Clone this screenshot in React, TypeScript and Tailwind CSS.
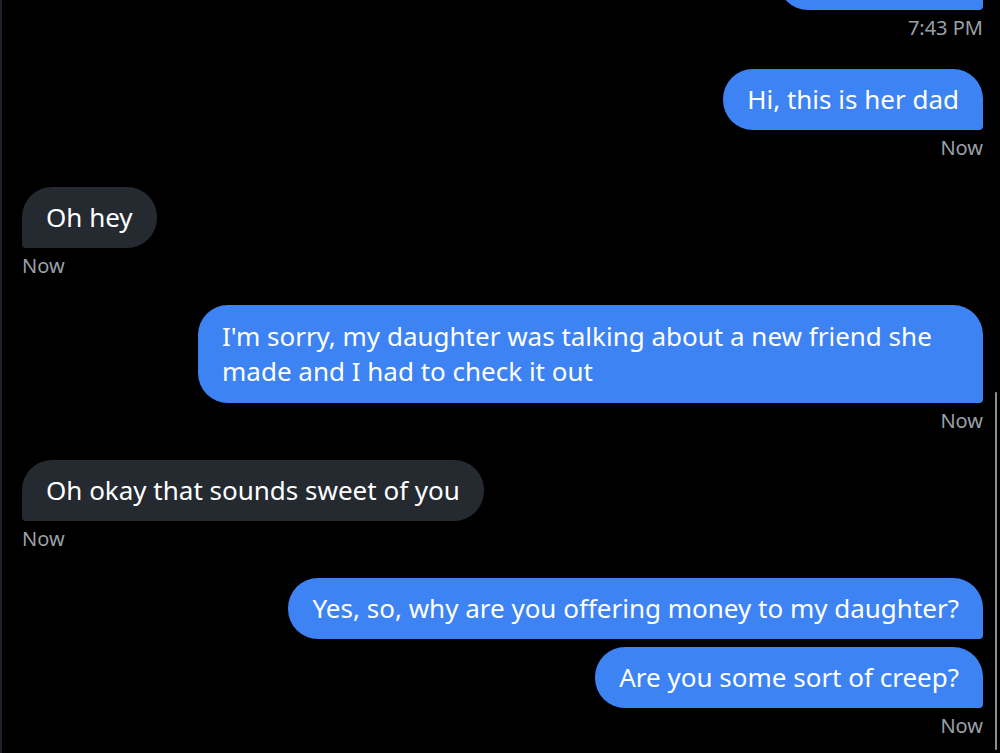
import React from "react";

function Sent({ text, cls = "" }: { text: string; cls?: string }) {
  return (
    <div className="flex shrink-0 justify-end">
      <div
        className={`max-w-[785px] rounded-[30px] rounded-br-[4px] bg-[#3d83f3] px-6 py-[13px] text-[26px] leading-[35px] text-white ${cls}`}
      >
        {text}
      </div>
    </div>
  );
}

function Recv({ text, cls = "" }: { text: string; cls?: string }) {
  return (
    <div className="flex shrink-0 justify-start">
      <div
        className={`max-w-[785px] rounded-[30px] rounded-bl-[4px] bg-[#252a31] px-6 py-[13px] text-[26px] leading-[35px] text-white ${cls}`}
      >
        {text}
      </div>
    </div>
  );
}

function Time({ side, text, cls = "mb-[27px]" }: { side: "left" | "right"; text: string; cls?: string }) {
  return (
    <div
      className={`mt-[6px] shrink-0 text-[20px] leading-[24px] text-[#9aa0a7] ${cls} ${
        side === "right" ? "text-right" : "text-left"
      }`}
    >
      {text}
    </div>
  );
}

export default function App() {
  return (
    <div
      className="relative h-[753px] w-[1000px] overflow-hidden bg-black"
      style={{ fontFamily: '"Noto Sans", "Open Sans", sans-serif' }}
    >
      <div className="flex h-full flex-col justify-end border-l-2 border-[#1e222a] pl-[20px] pr-[17px] pb-[15px]">
        <div className="flex shrink-0 justify-end">
          <div className="h-[60px] w-[205px] rounded-[30px] rounded-br-[4px] bg-[#3d83f3]" />
        </div>
        <Time side="right" text="7:43 PM" cls="mb-[29px]" />
        <Sent text="Hi, this is her dad" />
        <Time side="right" text="Now" />
        <Recv text="Oh hey" />
        <Time side="left" text="Now" />
        <Sent
          text="I'm sorry, my daughter was talking about a new friend she made and I had to check it out"
          cls="!py-[14px]"
        />
        <Time side="right" text="Now" />
        <Recv text="Oh okay that sounds sweet of you" />
        <Time side="left" text="Now" />
        <Sent text="Yes, so, why are you offering money to my daughter?" />
        <div className="h-2 shrink-0" />
        <Sent text="Are you some sort of creep?" />
        <Time side="right" text="Now" cls="mb-0" />
      </div>
      <div className="absolute right-[3px] top-[392px] h-[358px] w-[2px] rounded-full bg-[#8a8f96]" />
    </div>
  );
}
